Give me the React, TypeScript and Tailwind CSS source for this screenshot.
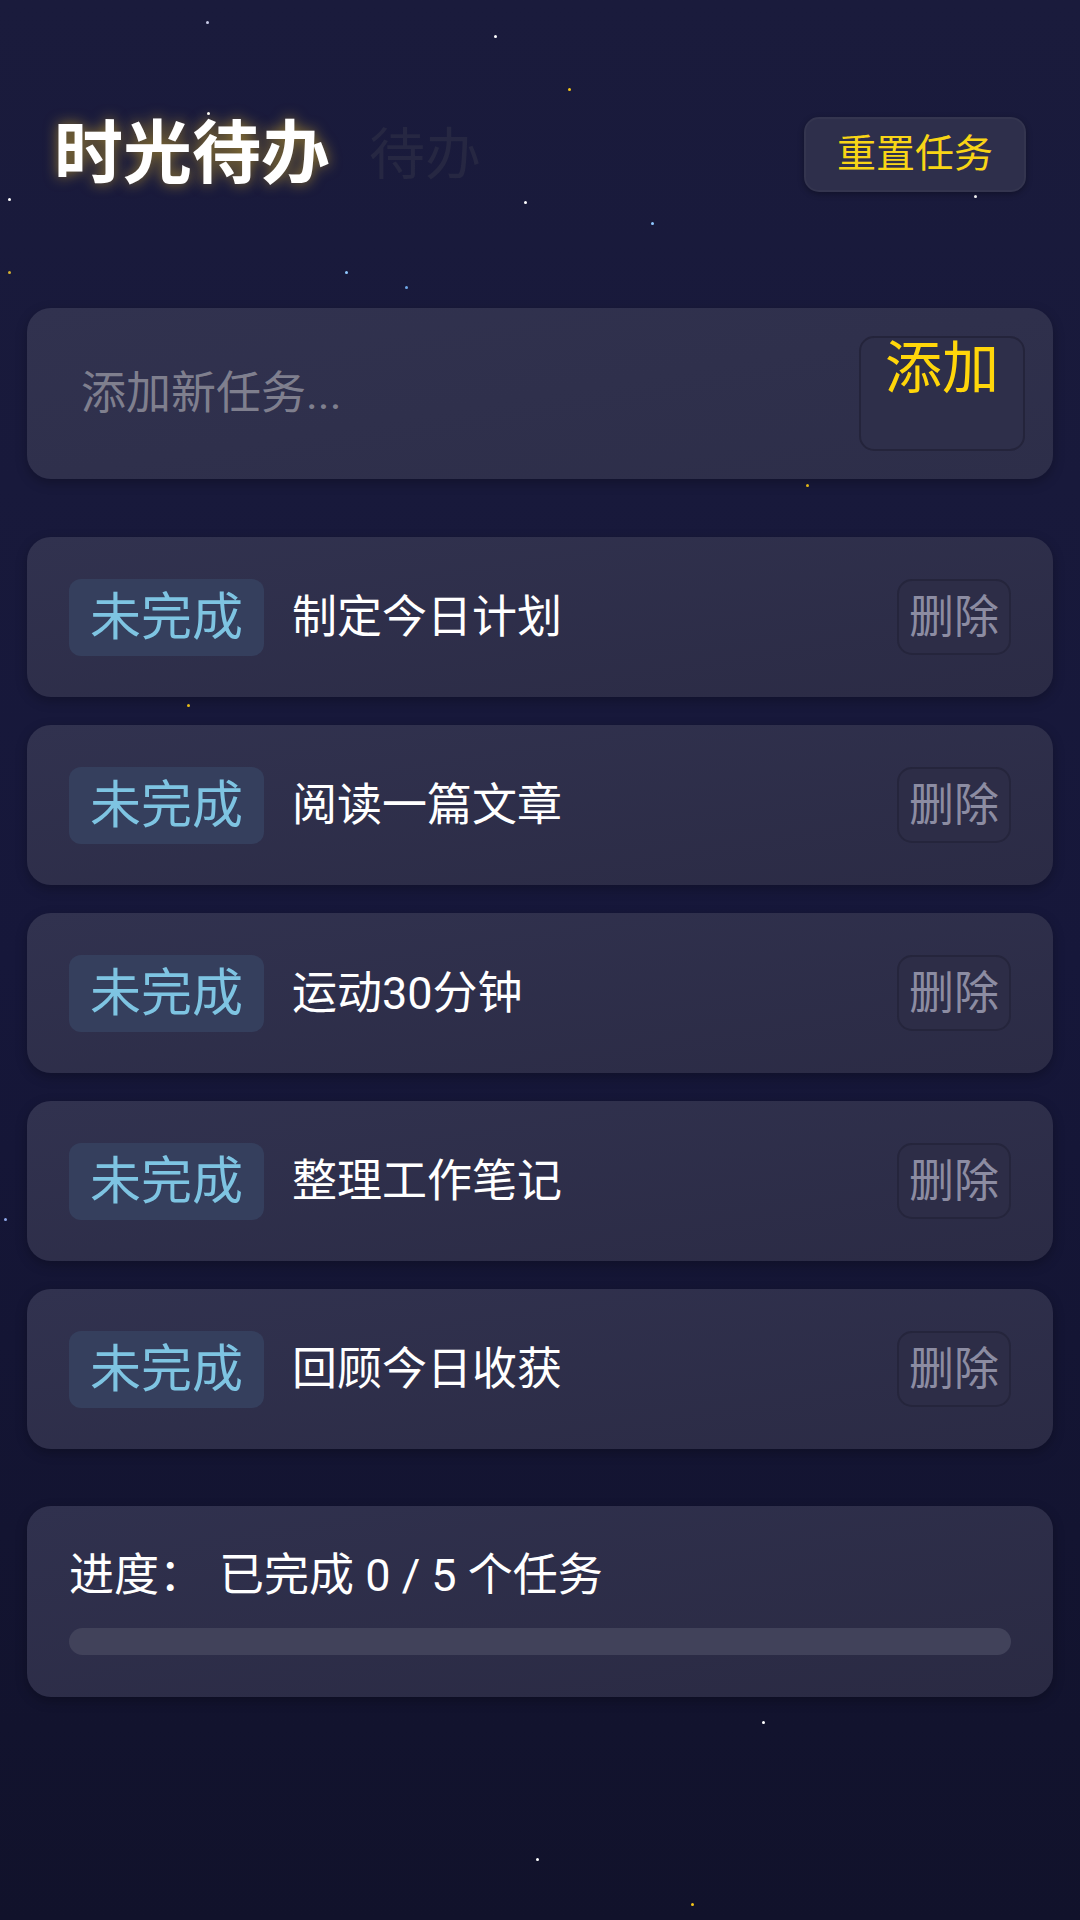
import React from "react";

const stars = [
  { x: 206, y: 21, c: "#c8cce8" },
  { x: 494, y: 35, c: "#ffffff" },
  { x: 568, y: 88, c: "#f5c518" },
  { x: 207, y: 112, c: "#ffffff" },
  { x: 8, y: 198, c: "#ffffff" },
  { x: 524, y: 201, c: "#ffffff" },
  { x: 974, y: 195, c: "#ffffff" },
  { x: 651, y: 222, c: "#8fc8ff" },
  { x: 8, y: 271, c: "#d4b030" },
  { x: 345, y: 271, c: "#8fc8ff" },
  { x: 405, y: 286, c: "#6fa8e8" },
  { x: 806, y: 484, c: "#f5c518" },
  { x: 187, y: 704, c: "#f5c518" },
  { x: 4, y: 1218, c: "#8fa8e8" },
  { x: 762, y: 1721, c: "#ffffff" },
  { x: 536, y: 1858, c: "#ffffff" },
  { x: 691, y: 1903, c: "#f5c518" },
];

const tasks = ["制定今日计划", "阅读一篇文章", "运动30分钟", "整理工作笔记", "回顾今日收获"];

export default function App() {
  return (
    <div
      className="relative min-h-[1920px] w-full overflow-hidden bg-gradient-to-b from-[#1a1b3c] via-[#16173a] to-[#11122b] px-[27px] pt-[117px]"
      style={{ fontFamily: 'Roboto, "Noto Sans CJK SC", "Noto Sans", sans-serif' }}
    >
      {stars.map((s, i) => (
        <span
          key={i}
          className="absolute h-[3px] w-[3px] rounded-full"
          style={{ left: s.x, top: s.y, backgroundColor: s.c }}
        />
      ))}

      <div className="relative flex h-[75px] items-center justify-between px-[27px]">
        <div className="flex items-center">
          <h1 className="text-[69px] font-bold leading-none text-white [text-shadow:0_0_14px_rgba(255,205,40,0.55)]">
            时光待办
          </h1>
          <span className="ml-[39px] text-[56px] leading-none text-[#262742]">待办</span>
        </div>
        <button className="flex h-[75px] items-center rounded-[15px] border-2 border-[#34354f] bg-[#2e2f4b] px-[31px] text-[39px] leading-none text-[#f8d516] shadow-[0_2px_6px_rgba(0,0,0,0.3)]">
          重置任务
        </button>
      </div>

      <div className="relative mt-[116px] flex h-[171px] items-stretch rounded-[24px] bg-gradient-to-br from-[#31324f] to-[#2d2e49] p-[28px] shadow-[0_4px_12px_rgba(0,0,0,0.25)]">
        <input
          className="min-w-0 flex-1 bg-transparent px-[26px] text-[45px] text-white outline-none placeholder:text-[#7f7f8e]"
          placeholder="添加新任务..."
        />
        <button className="flex w-[166px] items-start justify-center rounded-[15px] border-2 border-[#24243b] bg-[#2e2f4a] pt-[2px] text-[57px] leading-none text-[#ffd60a]">
          添加
        </button>
      </div>

      <div className="relative mt-[58px] flex flex-col gap-[28px]">
        {tasks.map((t) => (
          <div
            key={t}
            className="flex h-[160px] items-center rounded-[24px] bg-gradient-to-br from-[#31324f] to-[#2b2b45] px-[42px] shadow-[0_4px_12px_rgba(0,0,0,0.25)]"
          >
            <span className="flex h-[77px] items-center rounded-[12px] bg-[#353f5d] px-[21px] text-[51px] leading-none text-[#7ec4e2]">
              未完成
            </span>
            <span className="ml-[28px] flex-1 text-[45px] leading-none text-white">{t}</span>
            <button className="flex h-[76px] items-center rounded-[15px] border-2 border-[#25253c] bg-[#2d2d47] px-[10px] text-[45px] leading-none text-[#8c8ca2]">
              删除
            </button>
          </div>
        ))}
      </div>

      <div className="relative mt-[57px] rounded-[24px] bg-gradient-to-br from-[#30314e] to-[#2a2a43] p-[42px] shadow-[0_4px_12px_rgba(0,0,0,0.25)]">
        <div className="flex h-[54px] items-center text-[45px] leading-none text-white">
          <span>进度：</span>
          <span className="ml-[15px]">已完成 0 / 5 个任务</span>
        </div>
        <div className="mt-[26px] h-[27px] w-full rounded-full bg-[#41425a]" />
      </div>
    </div>
  );
}
